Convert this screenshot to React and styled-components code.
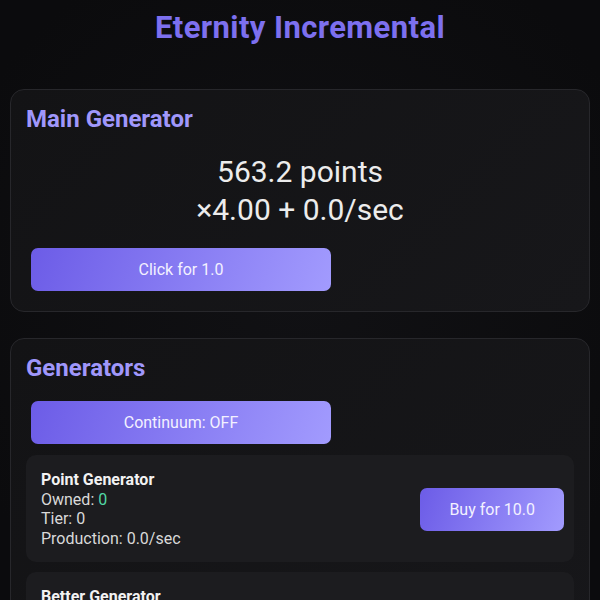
import React from "react";
import styled, { createGlobalStyle } from "styled-components";

const GlobalStyle = createGlobalStyle`
  body {
    margin: 0;
    background: #0b0b0d;
    font-family: Roboto, "Liberation Sans", sans-serif;
    color: #e6e6e6;
  }
`;

const Page = styled.div`
  min-height: 100vh;
  padding: 10px;
  box-sizing: border-box;
  background: radial-gradient(circle at 50% 40%, #111114 0%, #0b0b0d 70%);
`;

const Title = styled.h1`
  margin: 0 0 43px;
  text-align: center;
  font-size: 31px;
  line-height: 36px;
  font-weight: 700;
  letter-spacing: 0.4px;
  color: #7d70ef;
`;

const Card = styled.section`
  margin-bottom: 26px;
  padding: 15px;
  border: 1px solid #27272b;
  border-radius: 14px;
  background: linear-gradient(135deg, #131315 0%, #17171a 100%);
`;

const CardTitle = styled.h2`
  margin: 0 0 ${(p) => p.$gap || 19}px;
  font-size: 24px;
  line-height: 29px;
  font-weight: 700;
  color: #a097fb;
`;

const Stats = styled.div`
  margin-bottom: 20px;
  text-align: center;
  font-size: 30px;
  line-height: 37.5px;
  font-weight: 400;
  color: #ececec;
`;

const Button = styled.button`
  display: block;
  margin: 5px;
  width: ${(p) => (p.$wide ? "300px" : "auto")};
  padding: 12px 29px;
  border: none;
  border-radius: 7px;
  background: linear-gradient(110deg, #6c5ce7 0%, #a29bfe 100%);
  color: #f3f1ff;
  font-family: inherit;
  font-size: 16px;
  line-height: 19px;
  cursor: pointer;
  flex-shrink: 0;
`;

const List = styled.div`
  display: flex;
  flex-direction: column;
  gap: 10px;
  margin-top: 11px;
`;

const Item = styled.div`
  display: flex;
  align-items: center;
  justify-content: space-between;
  padding: 15px 5px 14px 15px;
  border-radius: 10px;
  background: #1c1c1f;
`;

const Info = styled.div`
  font-size: 16px;
  line-height: 19.5px;
  color: #d9d9d9;
`;

const Name = styled.div`
  font-weight: 700;
  color: #f2f2f2;
`;

const Count = styled.span`
  color: #52d8a6;
`;

const generators = [
  { name: "Point Generator", owned: 0, tier: 0, prod: "0.0", cost: "10.0" },
  { name: "Better Generator", owned: 0, tier: 0, prod: "0.0", cost: "100.0" },
];

export default function App() {
  return (
    <>
      <GlobalStyle />
      <Page>
        <Title>Eternity Incremental</Title>
        <Card>
          <CardTitle>Main Generator</CardTitle>
          <Stats>
            <div>563.2 points</div>
            <div>×4.00 + 0.0/sec</div>
          </Stats>
          <Button $wide>Click for 1.0</Button>
        </Card>
        <Card>
          <CardTitle $gap={18}>Generators</CardTitle>
          <Button $wide>Continuum: OFF</Button>
          <List>
            {generators.map((g) => (
              <Item key={g.name}>
                <Info>
                  <Name>{g.name}</Name>
                  <div>
                    Owned: <Count>{g.owned}</Count>
                  </div>
                  <div>Tier: {g.tier}</div>
                  <div>Production: {g.prod}/sec</div>
                </Info>
                <Button>Buy for {g.cost}</Button>
              </Item>
            ))}
          </List>
        </Card>
      </Page>
    </>
  );
}
